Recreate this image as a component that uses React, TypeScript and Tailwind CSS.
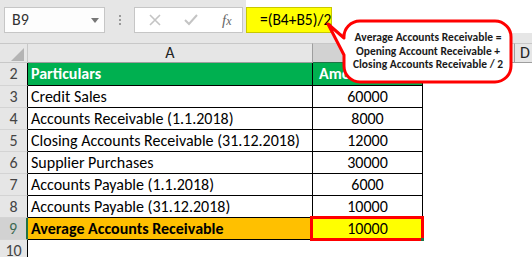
const rows: { n: number; label: string; value: string }[] = [
  { n: 3, label: 'Credit Sales', value: '60000' },
  { n: 4, label: 'Accounts Receivable (1.1.2018)', value: '8000' },
  { n: 5, label: 'Closing Accounts Receivable (31.12.2018)', value: '12000' },
  { n: 6, label: 'Supplier Purchases', value: '30000' },
  { n: 7, label: 'Accounts Payable (1.1.2018)', value: '6000' },
  { n: 8, label: 'Accounts Payable (31.12.2018)', value: '10000' },
];

function RowHead({ n, selected = false, tall = false }: { n: number; selected?: boolean; tall?: boolean }) {
  return (
    <div
      className={`flex items-center justify-center border-b border-b-[#d4d4d4] text-[16px] ${tall ? 'h-[23px]' : 'h-[22px]'} ${
        selected
          ? 'bg-[#d2d2d2] text-[#3e6a52] border-r-2 border-r-[#217346]'
          : 'bg-[#e6e6e6] text-[#444] border-r border-r-black'
      }`}
    >
      {n}
    </div>
  );
}

export default function App() {
  return (
    <div className="relative w-[532px] h-[257px] overflow-hidden bg-white font-['Carlito','Lato',sans-serif] text-black">
      {/* formula bar */}
      <div className="flex h-[43px] items-start bg-[#e6e6e6]">
        <div className="mt-[7px] ml-[4px] flex h-[26px] w-[101px] items-center justify-between border border-[#c6c6c6] bg-[#fdfdfd] pl-[7px] pr-[5px] text-[16px] text-[#333]">
          <span>B9</span>
          <svg width="8" height="5" viewBox="0 0 8 5">
            <path d="M0 0 H8 L4 5 Z" fill="#777" />
          </svg>
        </div>
        <div className="mt-[15px] ml-[14px] flex flex-col gap-[2px]">
          <span className="h-[2px] w-[2px] bg-[#9a9a9a]" />
          <span className="h-[2px] w-[2px] bg-[#9a9a9a]" />
          <span className="h-[2px] w-[2px] bg-[#9a9a9a]" />
        </div>
        <div className="mt-[7px] ml-[13px] flex h-[26px] w-[109px] items-center border border-[#c6c6c6] bg-white">
          <svg className="ml-[14px]" width="12" height="12" viewBox="0 0 12 12">
            <path d="M1 1 L11 11 M11 1 L1 11" stroke="#c4c4c4" strokeWidth="1.6" fill="none" />
          </svg>
          <svg className="ml-[23px]" width="14" height="12" viewBox="0 0 14 12">
            <path d="M1 6 L5 10 L13 1" stroke="#c4c4c4" strokeWidth="2" fill="none" />
          </svg>
          <span className="ml-[24px] font-['Liberation_Serif',serif] text-[15px] italic text-[#666]">
            f<span className="text-[12px]">x</span>
          </span>
        </div>
        <div className="ml-[3px] flex h-[33px] flex-1 items-end bg-white">
          <div className="flex h-[26px] w-[86px] items-center whitespace-nowrap border border-[#c8c800] bg-[#ffff00] pl-[13px] text-[15.5px]">
            =(B4+B5)/2
          </div>
        </div>
      </div>

      {/* sheet grid */}
      <div className="grid grid-cols-[28px_285px_110px_92px_1fr]">
        {/* column headers */}
        <div className="relative h-[20px] border-t border-r border-b border-[#c8c8c8] bg-[#e6e6e6]">
          <svg className="absolute left-[10px] top-[3px]" width="15" height="15" viewBox="0 0 15 15">
            <path d="M1 14 H14 V1 Z" fill="#b4b4b4" />
          </svg>
        </div>
        <div className="flex h-[20px] items-center justify-center border-t border-r border-b border-t-[#c8c8c8] border-r-[#9e9e9e] border-b-[#9e9e9e] bg-[#e6e6e6] text-[16px] text-[#222]">
          A
        </div>
        <div className="h-[20px] border-t border-r border-b border-t-[#c8c8c8] border-r-[#9e9e9e] border-b-[#217346] bg-[#d2d2d2]" />
        <div className="h-[20px] border-t border-r border-b border-t-[#c8c8c8] border-r-[#9e9e9e] border-b-[#9e9e9e] bg-[#e6e6e6]" />
        <div className="flex h-[20px] items-center border-t border-b border-t-[#c8c8c8] border-b-[#9e9e9e] bg-[#e6e6e6] pl-[5px] text-[16px] text-[#222]">
          D
        </div>

        {/* row 2 */}
        <RowHead n={2} tall />
        <div className="flex h-[23px] items-center border-r border-b border-black bg-[#00b050] pl-[3px] text-[16px] font-bold text-white">
          Particulars
        </div>
        <div className="flex h-[23px] items-center border-r border-b border-black bg-[#00b050] pl-[6px] text-[16px] font-bold text-white">
          Amount
        </div>
        <div className="h-[23px]" />
        <div className="h-[23px]" />

        {rows.map((r) => (
          <div key={r.n} className="contents">
            <RowHead n={r.n} />
            <div className="flex h-[22px] items-center border-r border-b border-black pl-[3px] text-[16px]">{r.label}</div>
            <div className="flex h-[22px] items-center justify-center border-r border-b border-black text-[16px]">{r.value}</div>
            <div className="h-[22px]" />
            <div className="h-[22px]" />
          </div>
        ))}

        {/* row 9 */}
        <RowHead n={9} selected />
        <div className="flex h-[22px] items-center border-r border-b border-black bg-[#ffc000] pl-[3px] text-[16px] font-bold">
          Average Accounts Receivable
        </div>
        <div className="relative flex h-[22px] items-center justify-center border-r border-b border-black bg-[#ffff00] text-[16px]">
          10000
          <div className="absolute -top-[2px] -right-[2px] -bottom-[2px] -left-[3px] border-[3px] border-[#ff0000]" />
          <div className="absolute -right-[2px] -bottom-[2px] h-[3px] w-[3px] bg-[#217346]" />
        </div>
        <div className="h-[22px]" />
        <div className="h-[22px]" />

        {/* row 10 */}
        <RowHead n={10} />
        <div className="h-[22px]" />
        <div className="h-[22px]" />
        <div className="h-[22px]" />
        <div className="h-[22px]" />
      </div>

      {/* callout */}
      <svg className="absolute left-0 top-0" width="532" height="257" viewBox="0 0 532 257">
        <path
          d="M360 21 H495 A16 16 0 0 1 511 37 V66 A16 16 0 0 1 495 82 H360 A16 16 0 0 1 344 66 V55 L328 24 L344 38 A16 16 0 0 1 360 21 Z"
          fill="#fff"
          stroke="#ff0000"
          strokeWidth="3"
          strokeLinejoin="round"
        />
      </svg>
      <div className="absolute left-[346px] top-[31px] w-[164px] text-center text-[11.5px] leading-[13.5px] font-bold text-[#1a1a1a]">
        Average Accounts Receivable =<br />
        Opening Account Receivable +<br />
        Closing Accounts Receivable / 2
      </div>
    </div>
  );
}
